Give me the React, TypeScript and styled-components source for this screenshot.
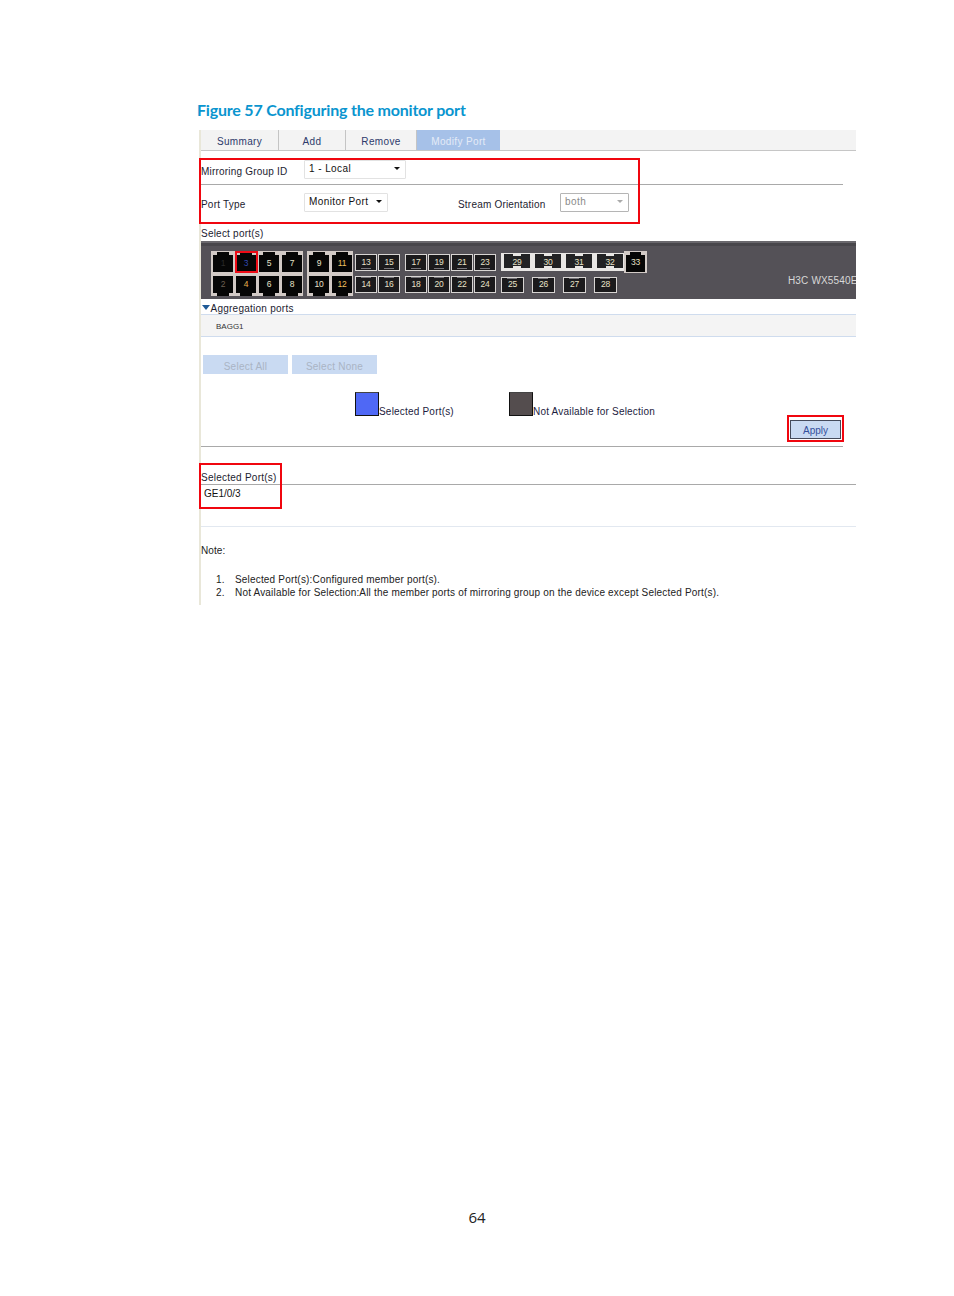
import React, { FunctionComponent } from 'react';
import styled, { createGlobalStyle } from 'styled-components';

/*
 * Styles
 */
const GlobalStyle = createGlobalStyle`
  html, body { margin: 0; padding: 0; background: #fff; }
  body { font-family: "Liberation Sans", Arial, sans-serif; }
`;

const Page = styled.div`
  width: 954px;
  height: 1296px;
  display: flex;
  flex-direction: column;
  padding-top: 100px;
  box-sizing: border-box;
`;

const Title = styled.h1`
  margin: 0 0 0 197px;
  height: 30px;
  font: 700 16px/20px Lato, sans-serif;
  letter-spacing: -0.2px;
  color: #0a95cf;
`;

const Panel = styled.div`
  position: relative;
  margin-left: 199px;
  width: 657px;
  height: 475px;
  box-sizing: border-box;
  border-left: 2px solid #e9e7d9;
  font-size: 10px;
  color: #222;
`;

const Tabs = styled.div`
  display: flex;
  height: 20px;
  background: #f3f3f3;
  border-bottom: 1px solid #c6c6c6;
`;

const Tab = styled.div<{ $width: number; $active?: boolean }>`
  width: ${(p) => p.$width}px;
  box-sizing: border-box;
  text-align: center;
  font-size: 10px;
  line-height: 23px;
  letter-spacing: 0.35px;
  color: ${(p) => (p.$active ? '#e4ebf7' : '#2d3a6b')};
  background: ${(p) => (p.$active ? '#a6c1e8' : 'transparent')};
  border-right: ${(p) => (p.$active ? 'none' : '1px solid #c4c4c4')};
`;

const FormRow = styled.div<{ $height: number; $rule?: boolean; $top?: number }>`
  display: flex;
  align-items: center;
  box-sizing: border-box;
  height: ${(p) => p.$height}px;
  width: 642px;
  padding-top: ${(p) => p.$top ?? 0}px;
  border-bottom: ${(p) => (p.$rule ? '1px solid #a9a9a9' : 'none')};
`;

const FieldLabel = styled.span<{ $width: number; $left?: number }>`
  width: ${(p) => p.$width}px;
  flex: none;
  margin-left: ${(p) => p.$left ?? 0}px;
  font-size: 10px;
  letter-spacing: 0.2px;
  padding-top: 4px;
  color: #1c1c30;
`;

const Select = styled.div<{ $width: number; $disabled?: boolean }>`
  display: flex;
  align-items: center;
  justify-content: space-between;
  box-sizing: border-box;
  width: ${(p) => p.$width}px;
  height: 19px;
  padding: 0 5px 1px 4px;
  font-size: 10px;
  letter-spacing: 0.42px;
  white-space: nowrap;
  color: ${(p) => (p.$disabled ? '#8a8a8a' : '#111')};
  border: 1px solid ${(p) => (p.$disabled ? '#b5b5b5' : '#e2e2e2')};
  border-radius: 1px;
`;

const Caret = styled.i<{ $disabled?: boolean }>`
  width: 0;
  height: 0;
  border-style: solid;
  border-width: 3px 3px 0;
  border-color: ${(p) => (p.$disabled ? '#aaa' : '#111')} transparent transparent;
`;

const SectionLabel = styled.div`
  height: 22px;
  line-height: 30px;
  font-size: 10px;
  letter-spacing: 0.22px;
  color: #1c1c30;
`;

const Device = styled.div`
  display: flex;
  align-items: flex-start;
  height: 58px;
  box-sizing: border-box;
  padding: 8px 0 0 10px;
  overflow: hidden;
  position: relative;
  background: #545157;
  border-top: 2px solid #6a686d;
  box-shadow: inset 0 3px 0 #48464b;
`;

const CopperBlock = styled.div<{ $left?: number; $columns: number }>`
  display: grid;
  grid-template-columns: repeat(${(p) => p.$columns}, 20px);
  grid-auto-rows: 17px;
  gap: 4px 3px;
  flex: none;
  margin-left: ${(p) => p.$left ?? 0}px;
  padding: 4px 1px 3px 2px;
  background: #d2cac6;
`;

const FramedBlock = styled.div<{ $left: number; $columns: number }>`
  display: grid;
  grid-template-columns: repeat(${(p) => p.$columns}, 22px);
  grid-auto-rows: 17px;
  gap: 5px 1px;
  flex: none;
  margin-left: ${(p) => p.$left}px;
  padding-top: 3px;
`;

const PortDigits = styled.div`
  position: relative;
  box-sizing: border-box;
  display: flex;
  align-items: center;
  justify-content: center;
  padding-bottom: 2px;
  font-size: 8.5px;
  letter-spacing: -0.2px;
`;

const CopperPort = styled(PortDigits)<{ $tone?: string; $flip?: boolean; $selected?: boolean }>`
  color: ${(p) => p.$tone ?? '#e8e2c8'};
  background: #060606;
  &::before {
    content: '';
    position: absolute;
    left: 4px;
    width: 12px;
    height: 3px;
    background: #060606;
    ${(p) => (p.$flip ? 'bottom: -3px;' : 'top: -3px;')}
  }
  ${(p) => p.$selected && `
    &::after {
      content: '';
      position: absolute;
      left: -1px;
      top: -4px;
      width: 23px;
      height: 22px;
      box-sizing: border-box;
      border: 2px solid #ee0b16;
    }
  `}
`;

const FramedPort = styled(PortDigits)<{ $flip?: boolean }>`
  color: #e8e2c8;
  background: #1b1a1c;
  border: 1px solid #d8d5d3;
  &::after {
    content: '';
    position: absolute;
    left: 5px;
    width: 10px;
    height: 1px;
    background: #77757a;
    ${(p) => (p.$flip ? 'top: 0;' : 'bottom: 1px;')}
  }
`;

const ComboColumn = styled.div`
  display: flex;
  flex-direction: column;
  margin-left: 5px;
`;

const ComboTop = styled.div`
  display: flex;
  align-items: flex-start;
  height: 26px;
`;

const ComboStrip = styled.div`
  display: flex;
  gap: 5px;
  height: 18px;
  box-sizing: border-box;
  margin-top: 2px;
  padding: 1px 1px 3px 3px;
  background: #e8e6e4;
`;

const ComboPort = styled(PortDigits)`
  width: 26px;
  padding: 2px 0 0;
  background: #222224;
  color: #e8e2c8;
  &::before, &::after {
    content: '';
    position: absolute;
    left: 9px;
    width: 8px;
    height: 2px;
    background: #e8e6e4;
  }
  &::before { top: 0; }
  &::after { bottom: 0; }
`;

const LoneFrame = styled.div`
  display: flex;
  box-sizing: border-box;
  width: 23px;
  height: 22px;
  padding: 4px 2px 1px;
  background: #d2cac6;
`;

const LonePort = styled(CopperPort)`
  width: 19px;
  height: 17px;
  padding-bottom: 3px;
  &::before { left: 4px; width: 11px; }
`;

const FiberRow = styled.div`
  display: flex;
  gap: 8px;
`;

const FiberPort = styled(FramedPort)`
  width: 23px;
  height: 16px;
`;

const DeviceName = styled.span`
  position: absolute;
  left: 587px;
  top: 31px;
  width: 68px;
  overflow: hidden;
  white-space: nowrap;
  font-size: 10px;
  letter-spacing: 0.15px;
  line-height: 13px;
  color: #d8d8d8;
`;

const AggHeader = styled.div`
  display: flex;
  align-items: center;
  box-sizing: border-box;
  height: 15px;
  padding-top: 3px;
  font-size: 10px;
  letter-spacing: 0.25px;
  color: #1c1c30;
`;

const AggTriangle = styled.i`
  width: 0;
  height: 0;
  margin: 0 0.5px 2px 1px;
  border-style: solid;
  border-width: 5px 4.5px 0;
  border-color: #1f5a96 transparent transparent;
`;

const AggRow = styled.div`
  height: 23px;
  box-sizing: border-box;
  padding-left: 15px;
  font-size: 8px;
  line-height: 23px;
  color: #333;
  background: #f4f4f4;
  border: 1px solid #cfdcee;
  border-width: 1px 0;
`;

const ButtonRow = styled.div`
  display: flex;
  gap: 4px;
  margin: 18px 0 0 2px;
`;

const GhostButton = styled.div`
  width: 85px;
  height: 19px;
  text-align: center;
  font-size: 10px;
  line-height: 23px;
  letter-spacing: 0.25px;
  color: #a9b4c4;
  background: #c9daf2;
`;

const LegendRow = styled.div`
  display: flex;
  align-items: flex-end;
  height: 24px;
  margin: 18px 0 0 154px;
`;

const Swatch = styled.div<{ $colour: string }>`
  width: 24px;
  height: 24px;
  box-sizing: border-box;
  background: ${(p) => p.$colour};
  border: 1px solid #111;
  border-top-color: #444;
`;

const LegendText = styled.span<{ $width?: number }>`
  width: ${(p) => (p.$width ? `${p.$width}px` : 'auto')};
  margin-bottom: -2px;
  font-size: 10px;
  line-height: 12px;
  letter-spacing: 0.2px;
  color: #1c1c40;
`;

const ApplyRow = styled.div`
  display: flex;
  justify-content: flex-end;
  width: 642px;
  height: 31px;
  box-sizing: border-box;
  padding: 4px 2px 0 0;
  border-bottom: 1px solid #a9a9a9;
`;

const ApplyButton = styled.div`
  width: 51px;
  height: 19px;
  box-sizing: border-box;
  text-align: center;
  font-size: 10px;
  line-height: 20px;
  color: #34509c;
  background: #c9daf2;
  border: 1px solid #444a5a;
`;

const SelectedHeader = styled.div`
  height: 19px;
  margin-top: 18px;
  line-height: 26px;
  font-size: 10px;
  letter-spacing: 0.25px;
  color: #1c1c30;
  border-bottom: 1px solid #a9a9a9;
`;

const SelectedBody = styled.div`
  height: 42px;
  box-sizing: border-box;
  padding: 2px 0 0 3px;
  font-size: 10px;
  line-height: 13px;
  letter-spacing: -0.02px;
  color: #111;
  border-bottom: 1px solid #e2e8f0;
`;

const NoteTitle = styled.div`
  margin-top: 18px;
  height: 12px;
  line-height: 12px;
  font-size: 10px;
  letter-spacing: 0.1px;
  color: #222;
`;

const NoteList = styled.ol`
  margin: 16px 0 0;
  padding: 0 0 0 15px;
  list-style: none;
  font-size: 10px;
  line-height: 13px;
  letter-spacing: 0.18px;
  color: #222;
`;

const NoteItem = styled.li`
  display: flex;
  white-space: nowrap;
`;

const NoteNumber = styled.span`
  width: 19px;
  flex: none;
`;

const RedBox = styled.div<{ $x: number; $y: number; $w: number; $h: number }>`
  position: absolute;
  left: ${(p) => p.$x}px;
  top: ${(p) => p.$y}px;
  width: ${(p) => p.$w}px;
  height: ${(p) => p.$h}px;
  box-sizing: border-box;
  border: 2px solid #f0060f;
  pointer-events: none;
`;

const Footer = styled.div`
  margin-top: 603px;
  text-align: center;
  font: 400 15px/18px "Open Sans", sans-serif;
  color: #222;
`;

/*
 * Data
 */
const dim = '#6d5f52';

const copperA = [
  { n: 1, tone: '#2a2a2a' }, { n: 3, tone: '#3148b0' }, { n: 5 }, { n: 7 },
  { n: 2, tone: dim }, { n: 4, tone: '#e9b04d' }, { n: 6 }, { n: 8 },
];
const copperB = [{ n: 9 }, { n: 11, tone: '#f0c060' }, { n: 10 }, { n: 12, tone: '#f0c060' }];
const framedA = [13, 15, 14, 16];
const framedB = [17, 19, 21, 23, 18, 20, 22, 24];

/*
 * Components
 */
const SwitchPanel: FunctionComponent = () => (
  <Device>
    <CopperBlock $columns={4}>
      {copperA.map((p, i) => (
        <CopperPort key={p.n} $tone={p.tone} $flip={i >= 4} $selected={p.n === 3}>{p.n}</CopperPort>
      ))}
    </CopperBlock>
    <CopperBlock $columns={2} $left={4}>
      {copperB.map((p, i) => <CopperPort key={p.n} $tone={p.tone} $flip={i >= 2}>{p.n}</CopperPort>)}
    </CopperBlock>
    <FramedBlock $columns={2} $left={2}>
      {framedA.map((n, i) => <FramedPort key={n} $flip={i >= 2}>{n}</FramedPort>)}
    </FramedBlock>
    <FramedBlock $columns={4} $left={5}>
      {framedB.map((n, i) => <FramedPort key={n} $flip={i >= 4}>{n}</FramedPort>)}
    </FramedBlock>
    <ComboColumn>
      <ComboTop>
        <ComboStrip>
          {[29, 30, 31, 32].map((n) => <ComboPort key={n}>{n}</ComboPort>)}
        </ComboStrip>
        <LoneFrame>
          <LonePort>33</LonePort>
        </LoneFrame>
      </ComboTop>
      <FiberRow>
        {[25, 26, 27, 28].map((n) => <FiberPort key={n} $flip>{n}</FiberPort>)}
      </FiberRow>
    </ComboColumn>
    <DeviceName>H3C WX5540E</DeviceName>
  </Device>
);

const App: FunctionComponent = () => (
  <Page>
    <GlobalStyle />
    <Title>Figure 57 Configuring the monitor port</Title>
    <Panel>
      <Tabs>
        <Tab $width={78}>Summary</Tab>
        <Tab $width={67}>Add</Tab>
        <Tab $width={71}>Remove</Tab>
        <Tab $width={83} $active>Modify Port</Tab>
      </Tabs>
      <FormRow $height={34} $top={3} $rule>
        <FieldLabel $width={103}>Mirroring Group ID</FieldLabel>
        <Select $width={102}>1 - Local<Caret /></Select>
      </FormRow>
      <FormRow $height={34}>
        <FieldLabel $width={103}>Port Type</FieldLabel>
        <Select $width={84}>Monitor Port<Caret /></Select>
        <FieldLabel $width={102} $left={70}>Stream Orientation</FieldLabel>
        <Select $width={69} $disabled>both<Caret $disabled /></Select>
      </FormRow>
      <SectionLabel>Select port(s)</SectionLabel>
      <SwitchPanel />
      <AggHeader><AggTriangle />Aggregation ports</AggHeader>
      <AggRow>BAGG1</AggRow>
      <ButtonRow>
        <GhostButton>Select All</GhostButton>
        <GhostButton>Select None</GhostButton>
      </ButtonRow>
      <LegendRow>
        <Swatch $colour="#4f68f5" />
        <LegendText $width={130}>Selected Port(s)</LegendText>
        <Swatch $colour="#544d4e" />
        <LegendText>Not Available for Selection</LegendText>
      </LegendRow>
      <ApplyRow><ApplyButton>Apply</ApplyButton></ApplyRow>
      <SelectedHeader>Selected Port(s)</SelectedHeader>
      <SelectedBody>GE1/0/3</SelectedBody>
      <NoteTitle>Note:</NoteTitle>
      <NoteList>
        <NoteItem><NoteNumber>1.</NoteNumber>Selected Port(s):Configured member port(s).</NoteItem>
        <NoteItem><NoteNumber>2.</NoteNumber>Not Available for Selection:All the member ports of mirroring group on the device except Selected Port(s).</NoteItem>
      </NoteList>
      <RedBox $x={-2} $y={28} $w={441} $h={66} />
      <RedBox $x={586} $y={285} $w={57} $h={27} />
      <RedBox $x={-2} $y={333} $w={83} $h={46} />
    </Panel>
    <Footer>64</Footer>
  </Page>
);

export default App;
